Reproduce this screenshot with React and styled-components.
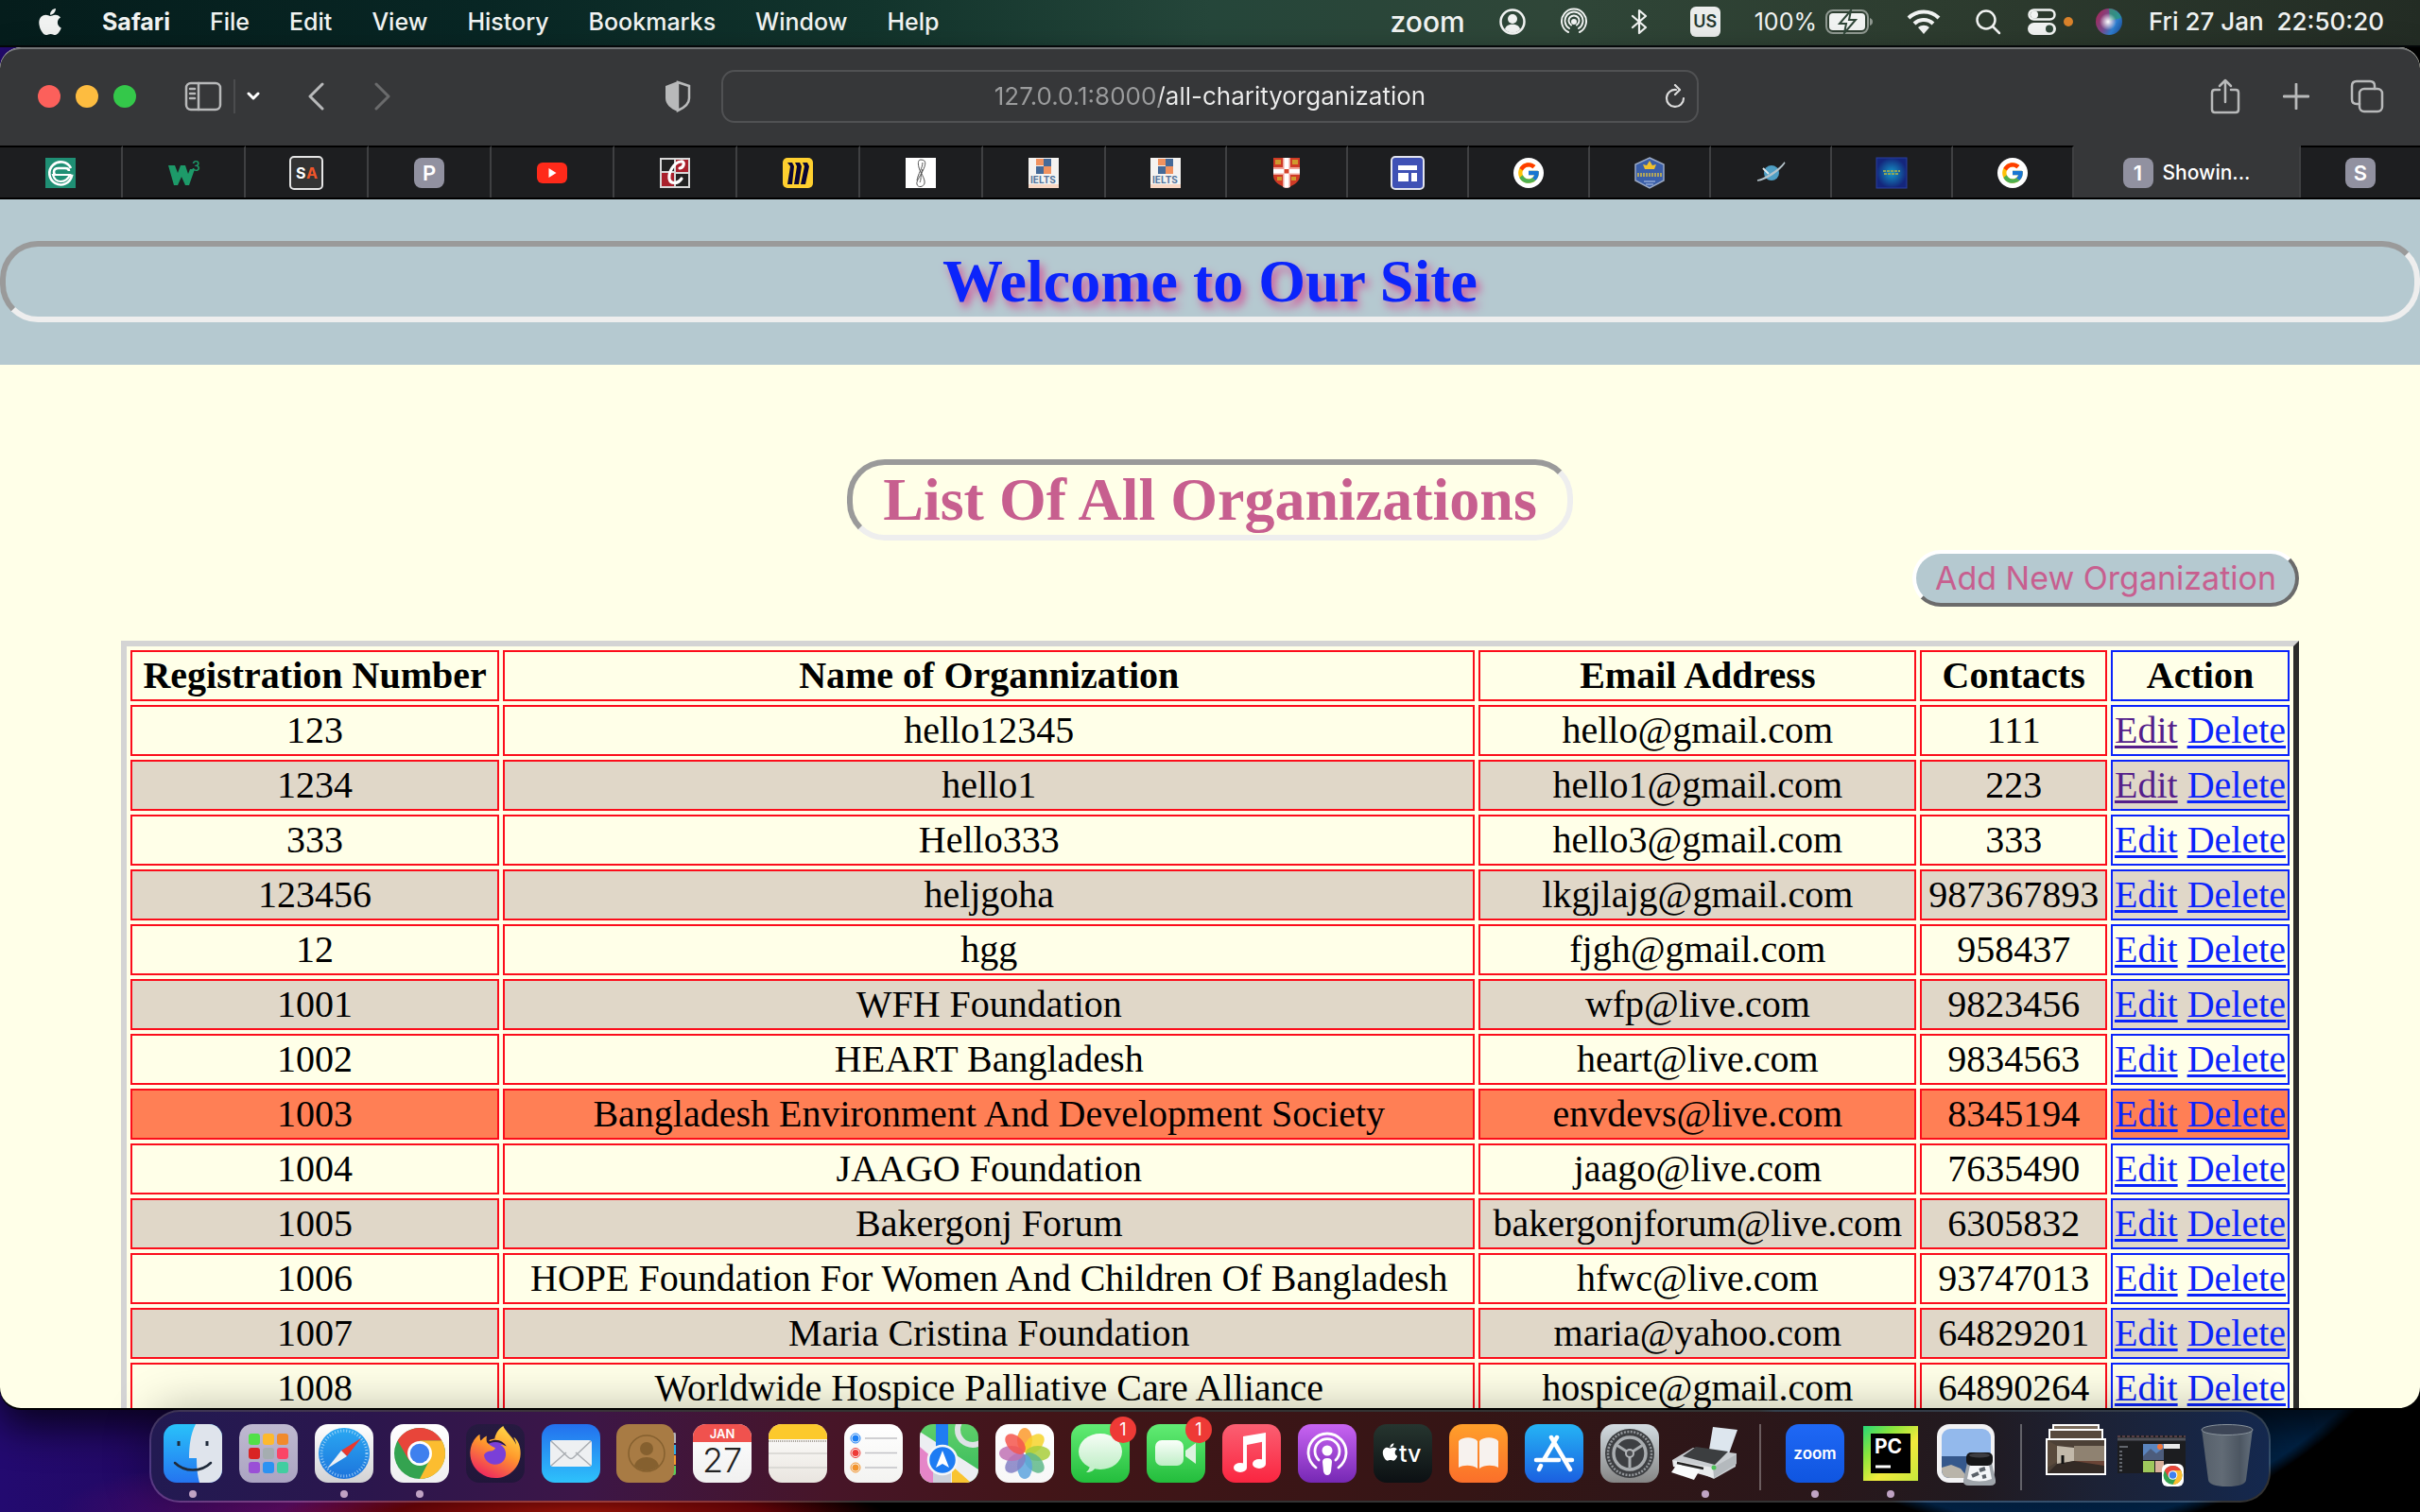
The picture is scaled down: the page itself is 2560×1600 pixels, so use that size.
import React from "react";
import styled, { createGlobalStyle } from "styled-components";
import { FaApple, FaFirefoxBrowser } from "react-icons/fa";
import { FcGoogle } from "react-icons/fc";

const ui = `Inter, "Liberation Sans", sans-serif`;
const serif = `"Liberation Serif", "Times New Roman", serif`;

const GlobalStyle = createGlobalStyle`
  *, *::before, *::after { box-sizing: border-box; }
  body { margin: 0; background: #000; overflow: hidden; }
  button { font: inherit; color: inherit; background: none; border: 0; padding: 0; }
  svg { display: block; flex: none; }
`;

const Desktop = styled.div`
  height: 100vh;
  display: grid;
  grid-template-rows: 50px minmax(0, 1fr) 110px;
  font-family: ${ui};
  background:
    radial-gradient(circle 445px at 85% calc(100% - 420px), #000a18 0, #011230 60%, #02254a 97%, transparent 100%),
    radial-gradient(ellipse 320px 30px at 24% 100%, #a01408 0%, #6a0408 60%, transparent 100%),
    radial-gradient(ellipse 300px 60px at 14% 100%, #6a0c68 0%, transparent 100%),
    linear-gradient(90deg, #230a70 0, #22085f 8%, #2c0750 14%, #1c0418 22%, #000 34%, #000 100%);
`;

/* ---------- menu bar ---------- */

const MenuBar = styled.header`
  display: flex;
  align-items: center;
  justify-content: space-between;
  padding: 0 38px 2px 40px;
  color: #f1f3f2;
  font-size: 25px;
  line-height: 30px;
  background: linear-gradient(90deg, #051d1c 0, #082624 20%, #12342c 36%, #25463a 50%, #2f4638 64%, #2d3c2f 80%, #232c24 100%);
  border-bottom: 2px solid #05080a;
`;

const MenuList = styled.nav`
  display: flex;
  align-items: center;
  gap: 42px;
`;

const MenuButton = styled.button`
  font-weight: ${(p) => (p.$strong ? 700 : 500)};
`;

const StatusArea = styled.div`
  display: flex;
  align-items: center;
  gap: 28px;
  white-space: pre;
`;

const StatusGroup = styled.div`
  display: flex;
  align-items: center;
  gap: ${(p) => p.$gap}px;
`;

const ZoomWord = styled.span`
  font-size: 30px;
  font-weight: 500;
`;

const InputSource = styled.span`
  width: 32px;
  height: 32px;
  border-radius: 6px;
  background: #ebedec;
  color: #24382f;
  font-size: 18px;
  font-weight: 600;
  line-height: 32px;
  text-align: center;
`;

const Clock = styled.time`
  font-weight: 500;
  font-size: 26px;
`;

/* ---------- browser window ---------- */

const Window = styled.main`
  display: flex;
  flex-direction: column;
  min-height: 0;
  overflow: hidden;
  border-radius: 22px;
  background: #ffffe8;
  box-shadow: 0 2px 0 #000, 0 20px 40px rgba(0, 0, 0, 0.7);
`;

const Toolbar = styled.div`
  flex: none;
  height: 104px;
  display: grid;
  grid-template-columns: minmax(0, 1fr) 1034px minmax(0, 1fr);
  align-items: center;
  padding-bottom: 2px;
  background: #363739;
  border-top: 2px solid #727476;
  border-radius: 22px 22px 0 0;
  color: #b8b9ba;
`;

const ToolbarStart = styled.div`
  display: flex;
  align-items: center;
  padding: 0 32px 0 40px;
`;

const Lights = styled.div`
  display: flex;
  gap: 16px;
  margin-right: 51px;
`;

const Light = styled.button`
  width: 24px;
  height: 24px;
  border-radius: 50%;
  background: ${(p) => p.$color};
`;

const ToolButton = styled.button`
  display: flex;
  align-items: center;
  justify-content: center;
  width: ${(p) => p.$width}px;
  height: 44px;
  opacity: ${(p) => (p.$dim ? 0.4 : 1)};
  margin-left: ${(p) => (p.$push ? "auto" : "0")};
`;

const ToolDivider = styled.span`
  width: 2px;
  height: 36px;
  margin-left: 12px;
  background: #4b4c4e;
`;

const AddressBox = styled.label`
  display: flex;
  align-items: center;
  height: 56px;
  padding: 0 12px 0 34px;
  border: 2px solid #505153;
  border-radius: 14px;
`;

const AddressInput = styled.input`
  flex: 1;
  min-width: 0;
  border: 0;
  padding: 0;
  outline: 0;
  text-align: center;
  font-family: ${ui};
  font-size: 26px;
  line-height: 32px;
  color: transparent;
  background: linear-gradient(90deg, #9b9c9d calc(50% - 53px), #ececec calc(50% - 53px));
  background-clip: text;
  -webkit-background-clip: text;
`;

const ToolbarEnd = styled.div`
  display: flex;
  align-items: center;
  justify-content: flex-end;
  gap: 27px;
  padding-right: 32px;
`;

const TabStrip = styled.div`
  flex: none;
  height: 57px;
  display: grid;
  grid-template-columns: repeat(9, 130fr) repeat(8, 128fr) 240fr 126fr;
  background: #1d1e20;
  border-bottom: 2px solid #000;
`;

const Tab = styled.button`
  display: flex;
  align-items: center;
  justify-content: center;
  gap: 10px;
  border-top: 2px solid ${(p) => (p.$active ? "#363739" : "#000")};
  border-right: 2px solid #3f4042;
  background: ${(p) => (p.$active ? "#363739" : "transparent")};
  color: #fff;
  font-size: 21px;
  font-weight: 500;
  min-width: 0;

  &:last-child { border-right: 0; }
`;

const LetterIcon = styled.span`
  width: 32px;
  height: 32px;
  border-radius: 8px;
  background: #9191a0;
  color: #fff;
  font-size: 22px;
  font-weight: 600;
  line-height: 32px;
`;

const GoogleDisc = styled.span`
  display: grid;
  place-items: center;
  width: 32px;
  height: 32px;
  border-radius: 50%;
  background: #fff;
`;

/* ---------- web page ---------- */

const Page = styled.div`
  flex: 1;
  min-height: 0;
  overflow: hidden;
  font-family: ${serif};
  color: #000;
`;

const Banner = styled.header`
  padding: 44px 0 45px;
  background: #b5c9d0;
`;

const boxed = `
  margin: 0;
  border: 6px solid;
  border-color: #9a9a9a #eeeeee #eeeeee #9a9a9a;
  border-radius: 40px;
  font-size: 64px;
  line-height: 74px;
  text-align: center;
`;

const SiteTitle = styled.h1`
  ${boxed}
  color: #0b24fb;
  text-shadow: 4px 6px 10px #d0589a;
`;

const ListTitle = styled.h1`
  ${boxed}
  width: 30%;
  margin: 100px auto 10px;
  white-space: nowrap;
  color: #c75f8f;
`;

const Content = styled.section`
  width: 90%;
  margin: 0 auto;
`;

const Actions = styled.div`
  display: flex;
  justify-content: flex-end;
  margin-bottom: 36px;
`;

const AddButton = styled.button`
  height: 60px;
  padding: 0 20px;
  border: 4px solid;
  border-color: #ffffff #6b6b6b #6b6b6b #ffffff;
  border-radius: 30px;
  background: #b5c9d0;
  color: #c75f8f;
  font-family: ${ui};
  font-size: 34px;
  line-height: 44px;
`;

const Table = styled.table`
  width: 100%;
  border: 6px solid;
  border-color: #d4d4d4 #2b2b2b #2b2b2b #d4d4d4;
  border-collapse: separate;
  border-spacing: 4px;
  font-size: 40px;
  line-height: 46px;
  text-align: center;

  th, td { padding: 2px; border: 2px solid #fc0d1b; white-space: nowrap; }
  th:last-child, td:last-child { width: 1%; border-color: #0b24fb; }
`;

const Row = styled.tr`
  background: ${(p) => (p.$hovered ? "#ff7f55" : p.$striped ? "#e0d7c8" : "transparent")};
`;

const RowLink = styled.a`
  color: ${(p) => (p.$visited ? "#551f8b" : "#0b24fb")};
  text-decoration: underline;
  text-decoration-thickness: 3px;
  text-underline-offset: 3px;
  text-decoration-skip-ink: none;
`;

/* ---------- dock ---------- */

const DockArea = styled.footer`
  position: relative;
  display: flex;
  justify-content: center;
  align-items: flex-start;
  padding-top: 2px;
`;

const Dock = styled.div`
  display: flex;
  height: 98px;
  padding: 13px 4px 0;
  border: 2px solid rgba(255, 255, 255, 0.2);
  border-radius: 32px;
  background: linear-gradient(90deg, #221a52 0, #2b164d 10%, #3c1648 20%, #471528 32%, #421518 42%, #351515 62%, #2a171a 78%, #211a20 86%, #1c2236 92%, #14284e 100%);
  background-clip: padding-box;
  box-shadow: 0 0 50px rgba(0, 0, 0, 0.3);
`;

const DockItem = styled.button`
  position: relative;
  display: flex;
  flex-direction: column;
  align-items: center;
  gap: 8px;
  width: 80px;
`;

const DockDivider = styled.span`
  width: 2px;
  height: 70px;
  margin: 0 17px;
  background: rgba(255, 255, 255, 0.3);
`;

const RunningDot = styled.span`
  width: 8px;
  height: 8px;
  border-radius: 50%;
  background: #c0a3c4;
`;

const Badge = styled.span`
  position: absolute;
  top: -8px;
  right: 2px;
  width: 28px;
  height: 28px;
  border-radius: 50%;
  background: #ee3a36;
  color: #fff;
  font-size: 18px;
  line-height: 28px;
`;

/* ---------- small drawings ---------- */

const line = { fill: "none", stroke: "currentColor", strokeLinecap: "round", strokeLinejoin: "round" };

const Fav = ({ children }) => (
  <svg width="36" height="36" viewBox="0 0 36 36" aria-hidden="true">{children}</svg>
);

const favicons = {
  e: (
    <Fav>
      <rect x="2" y="2" width="32" height="32" fill="#1f8f74" />
      <path d="M29 13a12 12 0 1 0 1 8H16q-5 0-5-4t5-4h7q4 0 4 3" fill="none" stroke="#fff" strokeWidth="2.600" />
      <path d="M10 20h18q-3 7-10 7-6 0-8-7z" fill="#1f8f74" stroke="#fff" strokeWidth="2.200" />
    </Fav>
  ),
  w3: (
    <Fav>
      <path d="M2 10h7l3 8 3-8h5l3 9 2-5h5l-6 17h-4l-4-9-4 9h-4z" fill="#1d9a69" />
      <text x="27" y="16" fontSize="14" fill="#1d9a69" fontFamily="Inter">3</text>
    </Fav>
  ),
  sa: (
    <Fav>
      <rect x="1" y="1" width="34" height="34" rx="4" fill="#333" stroke="#e5e5e5" strokeWidth="2" />
      <text x="7" y="24" fontSize="16" fontWeight="700" fill="#fff" fontFamily="Inter">S</text>
      <text x="18" y="24" fontSize="16" fontWeight="700" fill="#f0562a" fontFamily="Inter">A</text>
    </Fav>
  ),
  youtube: (
    <Fav>
      <rect x="2" y="7" width="32" height="22" rx="6" fill="#ff2a1a" />
      <path d="M14.500 13v10l8-5z" fill="#fff" />
    </Fav>
  ),
  c: (
    <Fav>
      <rect x="2" y="2" width="32" height="32" fill="#d8d8d8" />
      <path d="M4 4h13v12H4zM19 19h13v13H19z" fill="#222" />
      <path d="M19 4h13v13H19zM4 18h13v14H4z" fill="#a9202c" />
      <path d="M23 13c5-1 6-8 1-7-7 1-13 11-12 18 1 6 9 6 13 0" fill="none" stroke="#fff" strokeWidth="3.200" strokeLinecap="round" />
    </Fav>
  ),
  miro: (
    <Fav>
      <rect x="2" y="2" width="32" height="32" rx="5" fill="#ffd02f" />
      <path d="M7 7h5l2 4-2 19H7l3-19zM15 7h5l2 4-3 19h-5l3-19zM23 7h5l2 4-4 19h-5l4-19z" fill="#0a0634" />
    </Fav>
  ),
  chain: (
    <Fav>
      <rect x="2" y="2" width="32" height="32" fill="#fff" />
      <path d="M18 4c7 0 5 6 2 12-3 6-7 11-6 14 1 4 7 3 8-1 1-5-5-12-6-17-1-4-1-8 2-8zM20 7c0 6-5 12-6 19M17 28c2-4 0-6 3-14" fill="none" stroke="#555" strokeWidth="1" />
    </Fav>
  ),
  ielts: (
    <Fav>
      <rect x="2" y="2" width="32" height="32" fill="#f5f3f1" />
      <path d="M10 3h8v7h-8zM18 11h8v8h-8z" fill="#f0925f" />
      <path d="M18 3h8v8h-8zM10 11h8v8h-8z" fill="#456a98" />
      <text x="4" y="29" fontSize="10" fontWeight="700" fill="#54759c" fontFamily="Inter">IELTS</text>
      <path d="M2 30h32v4H2z" fill="#f8d7c4" />
    </Fav>
  ),
  shield: (
    <Fav>
      <path d="M4 2h28v19c0 6-6 10-14 13C10 31 4 27 4 21z" fill="#cf3a26" />
      <path d="M14 2h8v31l-4 1-4-1zM4 12h28v8H4z" fill="#f0a49a" />
      <path d="M15.500 2h5v31.500h-5zM4 14h28v4.500H4z" fill="#fff" />
      <path d="M15.500 14h5v4.500h-5z" fill="#d6452c" />
      <path d="M6 4h6v5H6zM24 4h6v5h-6zM8 22h5v4H8zM23 22h5v4h-5z" fill="#cf9a2e" />
    </Fav>
  ),
  sheet: (
    <Fav>
      <rect x="1" y="1" width="34" height="34" rx="4" fill="#3f51b5" stroke="#e3e5ee" strokeWidth="2" />
      <path d="M8 10h20v5H8zM8 18h11v9H8zM22 18h6v9h-6z" fill="#fff" />
    </Fav>
  ),
  hex: (
    <Fav>
      <path d="M18 2l15 7v17l-15 8-15-8V9z" fill="#3a5ea8" stroke="#9aa9c4" strokeWidth="1.500" />
      <path d="M18 5l3 5 4-1-2 5H13l-2-5 4 1z" fill="#f0c02c" />
      <path d="M5 20h26" stroke="#b0a45c" strokeWidth="4" strokeDasharray="2 1" />
      <path d="M12 27h12M14 30h8" stroke="#8fa6d2" strokeWidth="1.500" />
    </Fav>
  ),
  planet: (
    <Fav>
      <circle cx="19" cy="18" r="8" fill="#4f9fc4" />
      <path d="M4 26c6-1 22-10 29-19-6 9-20 18-29 19z" fill="#cfd8dc" stroke="#b5c3ca" strokeWidth="1.500" />
      <path d="M10 13l6 6" stroke="#dfe6e9" strokeWidth="2" />
    </Fav>
  ),
  blue: (
    <Fav>
      <defs>
        <radialGradient id="blueGlow"><stop offset="0" stopColor="#1496c8" /><stop offset="1" stopColor="#14267c" /></radialGradient>
      </defs>
      <rect x="2" y="2" width="32" height="32" fill="url(#blueGlow)" stroke="#2a3fa0" />
      <path d="M9 16h18M10 19h16" stroke="#8fa55a" strokeWidth="2" strokeDasharray="3 1" />
    </Fav>
  ),
  google: <GoogleDisc><FcGoogle size={26} /></GoogleDisc>,
  P: <LetterIcon>P</LetterIcon>,
  S: <LetterIcon>S</LetterIcon>,
  1: <LetterIcon>1</LetterIcon>,
};

const tabs = ["e", "w3", "sa", "P", "youtube", "c", "miro", "chain", "ielts", "ielts", "shield", "sheet", "google", "hex", "planet", "blue", "google", "1", "S"];

/* ---------- dock drawings ---------- */

const Grad = ({ id, from, to }) => (
  <linearGradient id={id} x1="0" y1="0" x2="0" y2="1">
    <stop offset="0" stopColor={from} />
    <stop offset="1" stopColor={to} />
  </linearGradient>
);

const Tile = ({ id, from, to, children }) => (
  <svg width="62" height="62" viewBox="0 0 62 62" aria-hidden="true">
    <defs>
      <Grad id={`${id}-bg`} from={from} to={to} />
      <clipPath id={`${id}-clip`}><rect width="62" height="62" rx="14" /></clipPath>
    </defs>
    <g clipPath={`url(#${id}-clip)`}>
      <rect width="62" height="62" fill={`url(#${id}-bg)`} />
      {children}
    </g>
  </svg>
);

const ChromeDisc = ({ cx, cy, r }) => {
  const k = r * 0.866;
  const h = r * 0.5;
  return (
    <g>
      <circle cx={cx} cy={cy} r={r} fill="#34a350" />
      <path d={`M${cx - k} ${cy - h}A${r} ${r} 0 0 1 ${cx + k} ${cy - h}L${cx} ${cy - h}L${cx} ${cy}L${cx - k * 0.5} ${cy + h * 0.5}Z`} fill="#e8453a" />
      <path d={`M${cx + k} ${cy - h}A${r} ${r} 0 0 1 ${cx} ${cy + r}L${cx + k * 0.45} ${cy + h * 0.5}L${cx} ${cy - h}Z`} fill="#fcbd30" />
      <circle cx={cx} cy={cy} r={r * 0.48} fill="#fff" />
      <circle cx={cx} cy={cy} r={r * 0.38} fill="#3f80ee" />
    </g>
  );
};

const launchColors = ["#52e048", "#fdb92e", "#f28a2c", "#d92424", "#a5adb0", "#fb4566", "#9a4fd6", "#2c92f2", "#42cda0"];
const petals = ["#fb9a2d", "#f6d32c", "#a8ce3c", "#5fb88a", "#5da5de", "#8480c4", "#c072b4", "#f4564c"];

const art = {
  finder: (
    <Tile id="finder" from="#29c2fa" to="#2474f0">
      <path d="M34 0h28v62H38c-2-7-3-15-3-26h-8c0-14 2-27 7-36z" fill="#dfe4ec" />
      <path d="M16 18v5M46 18v5" stroke="#1f2a3a" strokeWidth="3" />
      <path d="M12 41c10 10 28 10 38 0" fill="none" stroke="#1f2a3a" strokeWidth="2.500" strokeLinecap="round" />
    </Tile>
  ),
  launchpad: (
    <Tile id="launch" from="#bfb9d0" to="#aba4c2">
      {launchColors.map((c, i) => (
        <rect key={c} x={10 + (i % 3) * 15} y={10 + Math.floor(i / 3) * 15} width="12" height="12" rx="3" fill={c} />
      ))}
    </Tile>
  ),
  safari: (
    <Tile id="safari" from="#ffffff" to="#d2d2d4">
      <defs><Grad id="safari-sea" from="#2aa8f2" to="#1d74dc" /></defs>
      <circle cx="31" cy="31" r="27" fill="url(#safari-sea)" />
      <circle cx="31" cy="31" r="24" fill="none" stroke="#cfe8fb" strokeWidth="3" strokeDasharray="1 2.100" opacity=".7" />
      <path d="M49 15L28 28l6 6z" fill="#e8382e" />
      <path d="M13 47l15-19 6 6z" fill="#eef1f4" />
    </Tile>
  ),
  chrome: <Tile id="chrome" from="#ffffff" to="#efeff1"><ChromeDisc cx={31} cy={31} r={27} /></Tile>,
  firefox: (
    <Tile id="firefox" from="#261a40" to="#21163a">
      <defs>
        <linearGradient id="fox" x1=".8" y1="0" x2=".3" y2="1">
          <stop offset="0" stopColor="#ffe04a" /><stop offset=".45" stopColor="#ff9a2c" /><stop offset="1" stopColor="#ee2560" />
        </linearGradient>
      </defs>
      <circle cx="31" cy="33" r="14" fill="#7a3fd8" />
      <FaFirefoxBrowser x="3" y="2" size={56} color="url(#fox)" style={{ fill: "url(#fox)" }} />
    </Tile>
  ),
  mail: (
    <Tile id="mail" from="#2370ee" to="#2ec2fb">
      <rect x="9" y="17" width="44" height="28" rx="3" fill="#eef0f2" />
      <path d="M10 44l16-14M52 44L36 30M10 18l18 17q3 3 6 0l18-17" fill="none" stroke="#a9adb2" strokeWidth="1.500" />
    </Tile>
  ),
  contacts: (
    <svg width="66" height="62" viewBox="0 0 66 62" aria-hidden="true">
      <path d="M58 9h5q1 0 1 2v9h-6z" fill="#b4b4b8" /><path d="M58 22h6v10h-6z" fill="#31b0e8" />
      <path d="M58 33h6v10h-6z" fill="#f59b2e" /><path d="M58 44h6v8q0 2-2 2h-4z" fill="#5ccc58" />
      <rect x="1" width="61" height="62" rx="13" fill="#a87b44" />
      <circle cx="33" cy="31" r="19" fill="none" stroke="#85602f" strokeWidth="1.500" />
      <circle cx="33" cy="26" r="7" fill="#85602f" />
      <path d="M20 44c3-12 23-12 26 0-7 7-19 7-26 0z" fill="#85602f" />
    </svg>
  ),
  calendar: (
    <Tile id="calendar" from="#ffffff" to="#f0f0f0">
      <rect width="62" height="19" fill="#f0524e" />
      <text x="31" y="15" fontSize="13" fontWeight="600" fill="#fff" textAnchor="middle" fontFamily="Inter">JAN</text>
      <text x="31" y="51" fontSize="36" fontWeight="300" fill="#222" textAnchor="middle" fontFamily="Inter">27</text>
    </Tile>
  ),
  notes: (
    <Tile id="notes" from="#ffffff" to="#e9e5df">
      <rect width="62" height="16" fill="#fcc92c" />
      <path d="M0 18h62" stroke="#a8a39a" strokeWidth="2" strokeDasharray="1 1" />
      <path d="M0 31h62M0 46h62" stroke="#d5d3cf" strokeWidth="1.500" />
    </Tile>
  ),
  reminders: (
    <Tile id="reminders" from="#ffffff" to="#f3f3f1">
      {["#1c80f5", "#ee3b37", "#f1932c"].map((c, i) => (
        <g key={c}>
          <circle cx="12" cy={15 + i * 15.500} r="3.500" fill={c} />
          <circle cx="12" cy={15 + i * 15.500} r="5" fill="none" stroke={c} />
          <path d={`M22 ${15 + i * 15.500}h34`} stroke="#c2c2c6" strokeWidth="1.500" />
        </g>
      ))}
    </Tile>
  ),
  maps: (
    <Tile id="maps" from="#5fd06a" to="#36b95a">
      <path d="M0 8l62 40v14H0z" fill="#eceef2" />
      <path d="M0 24l14 12v26H0z" fill="#e585c8" />
      <path d="M34 62V44l20 18z" fill="#f9c430" />
      <circle cx="56" cy="6" r="16" fill="none" stroke="#dfe2e6" strokeWidth="6" />
      <path d="M14 36h19v26H14z" fill="#cdd1da" />
      <path d="M17 0h13v26H17z" fill="#1f7df2" />
      <circle cx="24" cy="38" r="15" fill="#1e7cf3" stroke="#f4f6f8" strokeWidth="2.500" />
      <path d="M24 28l7 18-7-4-7 4z" fill="#fff" />
    </Tile>
  ),
  photos: (
    <Tile id="photos" from="#ffffff" to="#f7f7f7">
      {petals.map((c, i) => (
        <ellipse key={c} cx="31" cy="17" rx="8" ry="13" fill={c} opacity=".85" transform={`rotate(${i * 45} 31 31)`} />
      ))}
    </Tile>
  ),
  messages: (
    <Tile id="messages" from="#62ec74" to="#23bd3c">
      <defs><Grad id="bubble" from="#f6fdf6" to="#bfeec6" /></defs>
      <ellipse cx="31" cy="29" rx="23" ry="19" fill="url(#bubble)" />
      <path d="M20 43c0 4-2 6-4 8 5 0 8-2 10-5z" fill="#c6efcc" />
    </Tile>
  ),
  facetime: (
    <Tile id="facetime" from="#62ec74" to="#23bd3c">
      <defs><Grad id="camera" from="#fafffa" to="#bfeec6" /></defs>
      <rect x="9" y="17" width="30" height="27" rx="7" fill="url(#camera)" />
      <path d="M41 28l11-8v22l-11-8z" fill="#ddf2df" />
    </Tile>
  ),
  music: (
    <Tile id="music" from="#fb5f72" to="#fa2540">
      <path d="M22 13l24-4v9l-20 4v24h-4z" fill="#fff" />
      <path d="M42 14h4v28h-4z" fill="#fff" />
      <ellipse cx="19" cy="46" rx="7" ry="5" fill="#fff" />
      <ellipse cx="39" cy="42" rx="7" ry="5" fill="#fff" />
    </Tile>
  ),
  podcasts: (
    <Tile id="podcasts" from="#c864f2" to="#7628b4">
      <path d="M19 46a20 20 0 1 1 24 0M22 38a13 13 0 1 1 18 0" fill="none" stroke="#fff" strokeWidth="2.800" strokeLinecap="round" />
      <circle cx="31" cy="28" r="5.500" fill="#fff" />
      <path d="M26 40q0-4 5-4t5 4l-1 10q-1 4-4 4t-4-4z" fill="#fff" />
    </Tile>
  ),
  tv: (
    <Tile id="tv" from="#26352f" to="#0c1013">
      <FaApple x="7" y="19" size={21} color="#fff" />
      <text x="27" y="40" fontSize="25" fontWeight="500" fill="#fff" fontFamily="Inter">tv</text>
    </Tile>
  ),
  books: (
    <Tile id="books" from="#ff9f2a" to="#fb6f2a">
      <path d="M30 18c-4-5-16-5-20 0v28c5-3 15-3 20 1zM32 18c4-5 16-5 20 0v28c-5-3-15-3-20 1z" fill="#f7f2ee" />
    </Tile>
  ),
  appstore: (
    <Tile id="appstore" from="#25b4f5" to="#1b5fe0">
      <path d="M34 14L20 38M28 14l20 34M12 38h24M43 38h7M17 44l-2 4" stroke="#fff" strokeWidth="4.500" strokeLinecap="round" />
    </Tile>
  ),
  settings: (
    <Tile id="settings" from="#d3dce2" to="#858585">
      <circle cx="31" cy="31" r="26" fill="#3d3f42" />
      <circle cx="31" cy="31" r="23" fill="none" stroke="#94989c" strokeWidth="2.500" strokeDasharray="2 1.500" />
      <circle cx="31" cy="31" r="17" fill="none" stroke="#a9adb0" strokeWidth="3.500" />
      <path d="M31 31V46M31 31L17 22M31 31l14-9" stroke="#a9adb0" strokeWidth="3" />
      <circle cx="31" cy="31" r="4" fill="#4a4c4f" stroke="#b2b5b8" strokeWidth="2" />
    </Tile>
  ),
  printer: (
    <svg width="72" height="62" viewBox="0 0 72 62" aria-hidden="true">
      <path d="M44 3l26 3-10 28-20-7z" fill="#dde6ee" />
      <path d="M1 38l22-13 46 6-1 14-23 13z" fill="#c9cdd1" />
      <path d="M12 34l14-10 34 5-14 14z" fill="#3c3e40" />
      <path d="M44 46l25-14v10L45 57z" fill="#b4b9bd" />
      <path d="M1 38l43 8 1 11L2 45z" fill="#e8eaec" />
      <path d="M7 41l24 6-7 12L0 51z" fill="#f8fafb" />
      <path d="M6 41l28 6" stroke="#222" strokeWidth="2.500" />
      <circle cx="45" cy="46" r="2.500" fill="#4fc25a" />
    </svg>
  ),
  zoom: (
    <Tile id="zoom" from="#1f68f5" to="#0f55e0">
      <text x="31" y="37" fontSize="17" fontWeight="600" fill="#fff" textAnchor="middle" fontFamily="Inter">zoom</text>
    </Tile>
  ),
  pycharm: (
    <svg width="62" height="62" viewBox="0 0 62 62" aria-hidden="true">
      <defs>
        <linearGradient id="pc" x1="0" y1="0" x2="1" y2="1">
          <stop offset="0" stopColor="#25d878" /><stop offset=".3" stopColor="#8be63c" /><stop offset=".6" stopColor="#f2ea3c" /><stop offset="1" stopColor="#c6e83c" />
        </linearGradient>
      </defs>
      <rect x="2" y="2" width="58" height="58" fill="url(#pc)" />
      <rect x="10" y="10" width="42" height="42" fill="#000" />
      <text x="14" y="31" fontSize="21" fontWeight="700" fill="#fff" fontFamily="Inter">PC</text>
      <path d="M15 45h16" stroke="#fff" strokeWidth="3" />
    </svg>
  ),
  preview: (
    <svg width="66" height="66" viewBox="0 0 66 66" aria-hidden="true">
      <rect x="2" y="0" width="61" height="62" rx="13" fill="#f2f2f4" />
      <rect x="7" y="5" width="52" height="52" rx="9" fill="#93b9ec" />
      <path d="M7 34h52v14q0 9-9 9H16q-9 0-9-9z" fill="#35588c" />
      <path d="M7 46l10-3 10 4 8 10H16q-9 0-9-9z" fill="#b9b4aa" />
      <path d="M34 41h26l4 18q1 6-6 6H36q-7 0-6-6z" fill="#9fa5ab" />
      <path d="M37 43h20l3 15q-13 5-26 0z" fill="#f4f6f8" />
      <path d="M39 55l7-3M47 49l6-2M50 56l4-1" stroke="#5a6168" strokeWidth="4" />
      <rect x="33" y="30" width="28" height="14" rx="5" fill="#151517" />
      <ellipse cx="47" cy="33" rx="11" ry="2.500" fill="#3c3c40" />
    </svg>
  ),
  stack: (
    <svg width="64" height="62" viewBox="0 0 64 62" aria-hidden="true">
      <rect x="8" y="1" width="48" height="20" fill="#7b6c5b" stroke="#fff" strokeWidth="2" />
      <rect x="4" y="6" width="56" height="20" fill="#57493c" stroke="#fff" strokeWidth="2" />
      <rect x="1" y="16" width="62" height="37" fill="#4c4036" stroke="#fff" strokeWidth="2" />
      <path d="M2 17l10 6v17L2 46z" fill="#5a4a3c" />
      <path d="M12 23l18 2v14l-18 4z" fill="#c2b9aa" />
      <path d="M30 23h32v16H30z" fill="#8f8271" />
      <path d="M30 39h32v5H30z" fill="#6a4436" />
      <path d="M2 52l10-10 18-3 32 5v8z" fill="#332a25" />
      <path d="M18 33v9" stroke="#111" strokeWidth="3" />
    </svg>
  ),
  screenshot: (
    <svg width="72" height="66" viewBox="0 0 72 66" aria-hidden="true">
      <rect y="12" width="72" height="40" fill="#1c1d20" />
      <path d="M0 16h72" stroke="#50525a" strokeWidth="3" />
      <path d="M0 13h72" stroke="#6a4a50" strokeWidth="1.500" strokeDasharray="3 2" />
      <path d="M2 24h9M2 29h3M2 33h3M2 37h3M2 41h3M2 45h3M2 49h3" stroke="#7a7f86" strokeWidth="1.500" />
      <rect x="27" y="21" width="22" height="17" fill="#5a84bd" />
      <path d="M27 34l8-8 6 5 8-6v13H27z" fill="#4c5c7c" />
      <path d="M49 21h17v5H49z" fill="#e9e9ea" />
      <circle cx="45" cy="24" r="3" fill="#f2763a" />
      <path d="M27 39h12v12H27z" fill="#9ec85c" /><path d="M40 39h9v12h-9z" fill="#d8b09c" />
      <rect x="47" y="42" width="23" height="24" rx="6" fill="#fff" />
      <ChromeDisc cx={58.5} cy={54} r={10} />
    </svg>
  ),
  trash: (
    <svg width="58" height="66" viewBox="0 0 58 66" aria-hidden="true">
      <defs>
        <linearGradient id="bin"><stop offset="0" stopColor="#5d666f" /><stop offset=".4" stopColor="#6a737b" /><stop offset=".75" stopColor="#525b64" /><stop offset="1" stopColor="#6c7781" /></linearGradient>
      </defs>
      <path d="M2 5l7 54q1 7 20 7t20-7l7-54z" fill="url(#bin)" opacity=".9" />
      <ellipse cx="29" cy="6" rx="27" ry="5.500" fill="#3d4657" stroke="#8a949d" strokeWidth="1" />
    </svg>
  ),
};

const dock = [
  [
    { name: "Finder", art: "finder", running: true },
    { name: "Launchpad", art: "launchpad" },
    { name: "Safari", art: "safari", running: true },
    { name: "Chrome", art: "chrome", running: true },
    { name: "Firefox", art: "firefox" },
    { name: "Mail", art: "mail" },
    { name: "Contacts", art: "contacts" },
    { name: "Calendar", art: "calendar" },
    { name: "Notes", art: "notes" },
    { name: "Reminders", art: "reminders" },
    { name: "Maps", art: "maps" },
    { name: "Photos", art: "photos" },
    { name: "Messages", art: "messages", badge: 1 },
    { name: "FaceTime", art: "facetime", badge: 1 },
    { name: "Music", art: "music" },
    { name: "Podcasts", art: "podcasts" },
    { name: "TV", art: "tv" },
    { name: "Books", art: "books" },
    { name: "App Store", art: "appstore" },
    { name: "System Settings", art: "settings" },
    { name: "Printer", art: "printer", running: true },
  ],
  [
    { name: "Zoom", art: "zoom", running: true },
    { name: "PyCharm", art: "pycharm", running: true },
    { name: "Preview", art: "preview" },
  ],
  [
    { name: "Pictures", art: "stack" },
    { name: "Chrome window", art: "screenshot" },
    { name: "Trash", art: "trash" },
  ],
];

const organizations = [
  { reg: "123", name: "hello12345", email: "hello@gmail.com", contact: "111", visited: true },
  { reg: "1234", name: "hello1", email: "hello1@gmail.com", contact: "223", visited: true },
  { reg: "333", name: "Hello333", email: "hello3@gmail.com", contact: "333" },
  { reg: "123456", name: "heljgoha", email: "lkgjlajg@gmail.com", contact: "987367893" },
  { reg: "12", name: "hgg", email: "fjgh@gmail.com", contact: "958437" },
  { reg: "1001", name: "WFH Foundation", email: "wfp@live.com", contact: "9823456" },
  { reg: "1002", name: "HEART Bangladesh", email: "heart@live.com", contact: "9834563" },
  { reg: "1003", name: "Bangladesh Environment And Development Society", email: "envdevs@live.com", contact: "8345194", hovered: true },
  { reg: "1004", name: "JAAGO Foundation", email: "jaago@live.com", contact: "7635490" },
  { reg: "1005", name: "Bakergonj Forum", email: "bakergonjforum@live.com", contact: "6305832" },
  { reg: "1006", name: "HOPE Foundation For Women And Children Of Bangladesh", email: "hfwc@live.com", contact: "93747013" },
  { reg: "1007", name: "Maria Cristina Foundation", email: "maria@yahoo.com", contact: "64829201" },
  { reg: "1008", name: "Worldwide Hospice Palliative Care Alliance", email: "hospice@gmail.com", contact: "64890264" },
];

function SystemMenu() {
  return (
    <MenuBar>
      <MenuList aria-label="Application menu">
        <MenuButton aria-label="Apple">
          <svg width="26" height="32" viewBox="0 0 384 480"><FaApple size={480} x={-48} /></svg>
        </MenuButton>
        <MenuButton $strong>Safari</MenuButton>
        {["File", "Edit", "View", "History", "Bookmarks", "Window", "Help"].map((m) => (
          <MenuButton key={m}>{m}</MenuButton>
        ))}
      </MenuList>
      <StatusArea>
        <StatusGroup $gap={36}>
          <ZoomWord>zoom</ZoomWord>
          <svg width="28" height="28" viewBox="0 0 28 28">
            <circle cx="14" cy="14" r="12.500" fill="none" stroke="currentColor" strokeWidth="2.500" />
            <circle cx="14" cy="11" r="5" fill="currentColor" />
            <path d="M6 22c1-7 15-7 16 0-5 5-11 5-16 0z" fill="currentColor" />
          </svg>
          <svg width="30" height="30" viewBox="0 0 30 30" {...line} strokeWidth="2">
            <path d="M9 26a13 13 0 1 1 12 0M10 22a9.500 9.500 0 1 1 10 0M12 18.500a5.500 5.500 0 1 1 6 0" />
            <circle cx="15" cy="15" r="2" fill="currentColor" />
          </svg>
          <svg width="36" height="30" viewBox="0 0 36 30" {...line} strokeWidth="2.200">
            <path d="M11 9l14 12-7 6V3l7 6-14 12" />
          </svg>
          <InputSource>US</InputSource>
          <StatusGroup $gap={9}>
            <span>100%</span>
            <svg width="50" height="26" viewBox="0 0 50 26">
              <rect x="1" y="1" width="44" height="24" rx="7" fill="none" stroke="currentColor" strokeWidth="2" opacity=".5" />
              <path d="M47 9v8q3-1 3-4t-3-4z" fill="currentColor" opacity=".5" />
              <rect x="4" y="4" width="38" height="18" rx="4" fill="currentColor" />
              <path d="M27 1L15 15h7l-2 10 12-14h-7z" fill="currentColor" stroke="#2f4638" strokeWidth="2" />
            </svg>
          </StatusGroup>
          <svg width="36" height="26" viewBox="0 0 36 26">
            <path d="M2 9a23 23 0 0 1 32 0M8 15a14.500 14.500 0 0 1 20 0" fill="none" stroke="currentColor" strokeWidth="4" />
            <path d="M12 19a9 9 0 0 1 12 0l-6 7z" fill="currentColor" />
          </svg>
          <svg width="28" height="28" viewBox="0 0 28 28" {...line} strokeWidth="2.500">
            <circle cx="12" cy="12" r="9.500" /><path d="M19 19l7 7" />
          </svg>
        </StatusGroup>
        <StatusGroup $gap={24}>
          <StatusGroup $gap={8}>
            <svg width="30" height="28" viewBox="0 0 30 28">
              <rect x="1.500" y="1.500" width="27" height="10" rx="5" fill="none" stroke="currentColor" strokeWidth="2.500" />
              <circle cx="7" cy="6.500" r="4" fill="currentColor" />
              <rect y="15" width="30" height="13" rx="6.500" fill="currentColor" />
              <circle cx="23" cy="21.500" r="4" fill="#2f4638" />
            </svg>
            <svg width="10" height="10" viewBox="0 0 10 10"><circle cx="5" cy="5" r="5" fill="#d9822b" /></svg>
          </StatusGroup>
          <svg width="28" height="28" viewBox="0 0 28 28">
            <defs>
              <radialGradient id="siri-core"><stop offset="0" stopColor="#fff" /><stop offset="1" stopColor="#fff" stopOpacity="0" /></radialGradient>
              <linearGradient id="siri" x1="0" y1="0.300" x2="1" y2="0.800">
                <stop offset="0" stopColor="#a02a5c" /><stop offset=".4" stopColor="#7a4a8c" /><stop offset=".7" stopColor="#2f7fd0" /><stop offset="1" stopColor="#1d4f9a" />
              </linearGradient>
            </defs>
            <circle cx="14" cy="14" r="14" fill="url(#siri)" />
            <path d="M14 0a14 14 0 0 1 13 10L15 13z" fill="#2a9a7c" opacity=".8" />
            <circle cx="13" cy="14" r="9" fill="url(#siri-core)" />
          </svg>
        </StatusGroup>
        <Clock>{"Fri 27 Jan  22:50:20"}</Clock>
      </StatusArea>
    </MenuBar>
  );
}

function BrowserToolbar() {
  return (
    <Toolbar>
      <ToolbarStart>
        <Lights>
          <Light $color="#fc605b" aria-label="Close" />
          <Light $color="#fdbc40" aria-label="Minimise" />
          <Light $color="#34c84a" aria-label="Zoom window" />
        </Lights>
        <ToolButton $width={40} aria-label="Sidebar">
          <svg width="40" height="32" viewBox="0 0 40 32" {...line} strokeWidth="2.500">
            <rect x="2" y="2" width="36" height="28" rx="5" /><path d="M15 2v28M6 8h5M6 13h5M6 18h5" />
          </svg>
        </ToolButton>
        <ToolDivider />
        <ToolButton $width={38} aria-label="Tab groups">
          <svg width="14" height="10" viewBox="0 0 14 10" {...line} stroke="#fff" strokeWidth="3"><path d="M2 2l5 5 5-5" /></svg>
        </ToolButton>
        <ToolButton $width={94} aria-label="Back">
          <svg width="18" height="30" viewBox="0 0 18 30" {...line} strokeWidth="3"><path d="M16 2L3 15l13 13" /></svg>
        </ToolButton>
        <ToolButton $width={48} $dim aria-label="Forward">
          <svg width="18" height="30" viewBox="0 0 18 30" {...line} strokeWidth="3"><path d="M2 2l13 13L2 28" /></svg>
        </ToolButton>
        <ToolButton $width={28} $push aria-label="Privacy report">
          <svg width="28" height="34" viewBox="0 0 28 34">
            <path d="M14 2l12 4v13c0 6-5 10-12 13z" fill="none" stroke="currentColor" strokeWidth="2.500" />
            <path d="M14 1L1 6v13c0 6 5 11 13 14z" fill="currentColor" />
          </svg>
        </ToolButton>
      </ToolbarStart>
      <AddressBox>
        <AddressInput aria-label="Address" defaultValue="127.0.0.1:8000/all-charityorganization" />
        <ToolButton $width={22} aria-label="Reload">
          <svg width="22" height="26" viewBox="0 0 22 26" {...line} stroke="#dcdcdc" strokeWidth="2.200">
            <path d="M12 6a9 9 0 1 0 8 9M11 1l5 5-5 5" />
          </svg>
        </ToolButton>
      </AddressBox>
      <ToolbarEnd>
        <ToolButton $width={48} aria-label="Share">
          <svg width="32" height="38" viewBox="0 0 32 38" {...line} strokeWidth="2.500">
            <path d="M10 12H5q-3 0-3 3v18q0 3 3 3h22q3 0 3-3V15q0-3-3-3h-5M16 25V2M10 8l6-6 6 6" />
          </svg>
        </ToolButton>
        <ToolButton $width={48} aria-label="New tab">
          <svg width="28" height="28" viewBox="0 0 28 28" {...line} strokeWidth="2.800"><path d="M14 1v26M1 14h26" /></svg>
        </ToolButton>
        <ToolButton $width={48} aria-label="Tab overview">
          <svg width="36" height="36" viewBox="0 0 36 36" {...line} strokeWidth="2.500">
            <rect x="10" y="10" width="24" height="24" rx="5" /><path d="M10 26H7q-5 0-5-5V7q0-5 5-5h14q5 0 5 5v3" />
          </svg>
        </ToolButton>
      </ToolbarEnd>
    </Toolbar>
  );
}

function OrganizationTable() {
  return (
    <Table>
      <thead>
        <tr>
          <th scope="col">Registration Number</th>
          <th scope="col">Name of Organnization</th>
          <th scope="col">Email Address</th>
          <th scope="col">Contacts</th>
          <th scope="col">Action</th>
        </tr>
      </thead>
      <tbody>
        {organizations.map((o, i) => (
          <Row key={o.reg} $striped={i % 2 === 1} $hovered={o.hovered}>
            <td>{o.reg}</td>
            <td>{o.name}</td>
            <td>{o.email}</td>
            <td>{o.contact}</td>
            <td>
              <RowLink href="#edit" $visited={o.visited}>Edit</RowLink>{" "}
              <RowLink href="#delete">Delete</RowLink>
            </td>
          </Row>
        ))}
      </tbody>
    </Table>
  );
}

export default function App() {
  return (
    <Desktop>
      <GlobalStyle />
      <SystemMenu />
      <Window>
        <BrowserToolbar />
        <TabStrip>
          {tabs.map((t, i) => (
            <Tab key={i} $active={t === "1"} aria-label={t === "1" ? undefined : `Tab ${i + 1}`}>
              {favicons[t]}
              {t === "1" && <span>Showin...</span>}
            </Tab>
          ))}
        </TabStrip>
        <Page>
          <Banner><SiteTitle>Welcome to Our Site</SiteTitle></Banner>
          <ListTitle>List Of All Organizations</ListTitle>
          <Content>
            <Actions><AddButton>Add New Organization</AddButton></Actions>
            <OrganizationTable />
          </Content>
        </Page>
      </Window>
      <DockArea>
        <Dock>
          {dock.map((group, g) => (
            <React.Fragment key={g}>
              {g > 0 && <DockDivider />}
              {group.map((app) => (
                <DockItem key={app.name} aria-label={app.name}>
                  {art[app.art]}
                  {app.running && <RunningDot />}
                  {app.badge && <Badge>{app.badge}</Badge>}
                </DockItem>
              ))}
            </React.Fragment>
          ))}
        </Dock>
      </DockArea>
    </Desktop>
  );
}
